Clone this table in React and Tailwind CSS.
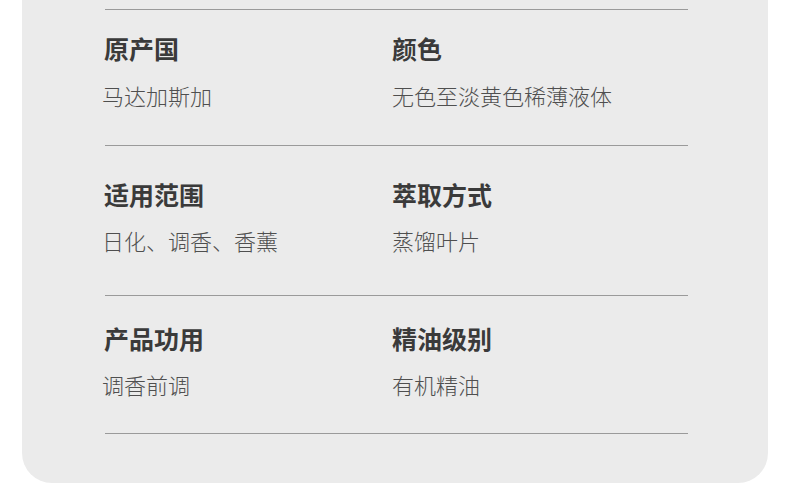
export default function App() {
  const rows = [
    { pt: "pt-[23px]", pb: "pb-[35px]", gap: "gap-[17px]", items: [["原产国", "马达加斯加"], ["颜色", "无色至淡黄色稀薄液体"]] },
    { pt: "pt-[33px]", pb: "pb-[40px]", gap: "gap-[16px]", items: [["适用范围", "日化、调香、香薰"], ["萃取方式", "蒸馏叶片"]] },
    { pt: "pt-[27px]", pb: "pb-[34px]", gap: "gap-[16px]", items: [["产品功用", "调香前调"], ["精油级别", "有机精油"]] },
  ];
  return (
    <div
      className="w-[790px] h-[498px] bg-white overflow-hidden"
      style={{ fontFamily: '"Noto Sans CJK SC", "Noto Sans", sans-serif' }}
    >
      <div className="ml-[22px] w-[746px] bg-[#ebebeb] rounded-b-[30px] pt-[9px] pb-[49px]">
        <div className="ml-[83px] w-[583px]">
          <div className="h-px bg-[#9a9a9a]" />
          {rows.map((row, i) => (
            <div key={i}>
              <div className={`grid grid-cols-[288px_1fr] ${row.pt} ${row.pb}`}>
                {row.items.map(([t, v], j) => (
                  <div key={j} className={`flex flex-col ${row.gap} -ml-px`}>
                    <div className="text-[25px] leading-[30px] font-bold text-[#3a3a3a]">{t}</div>
                    <div className={`text-[22px] leading-[30px] font-light text-[#4f4f4f] ${j === 0 ? "-ml-[2px]" : "ml-0"}`}>{v}</div>
                  </div>
                ))}
              </div>
              <div className="h-px bg-[#9a9a9a]" />
            </div>
          ))}
        </div>
      </div>
    </div>
  );
}
